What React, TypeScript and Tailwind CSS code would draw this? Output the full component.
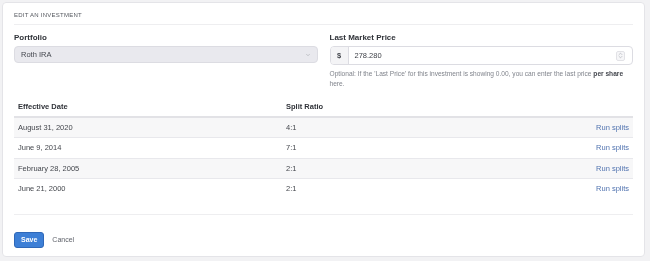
import { ChevronDown, ChevronsUpDown } from "lucide-react";

const SPLITS = [
  { date: "August 31, 2020", ratio: "4:1" },
  { date: "June 9, 2014", ratio: "7:1" },
  { date: "February 28, 2005", ratio: "2:1" },
  { date: "June 21, 2000", ratio: "2:1" },
];

export default function App() {
  return (
    <div className="h-[261px] w-[650px] bg-[#f2f2f4] p-[2px] font-['Liberation_Sans',Arial,sans-serif]">
      <div className="h-[255px] w-[643px] rounded-[4px] border border-[#e4e4e8] bg-white px-[11px] pt-[8px] will-change-transform">
        <div className="border-b border-[#eeeef0] pb-[5px] text-[6px] leading-[8px] uppercase tracking-[0.04em] text-[#55585f]">
          Edit an Investment
        </div>

        <div className="mt-[8px] grid grid-cols-2 gap-[12px]">
          <div>
            <div className="text-[8px] font-bold leading-[10px] text-[#2f3238]">Portfolio</div>
            <div className="mt-[3px] flex h-[17px] items-center justify-between rounded-[4px] border border-[#dcdce2] bg-[#e9e9ee] px-[6px] text-[7.5px] text-[#44474e]">
              <span>Roth IRA</span>
              <ChevronDown className="h-[6px] w-[6px] text-[#9a9ca3]" strokeWidth={2} />
            </div>
          </div>
          <div>
            <div className="text-[8px] font-bold leading-[10px] text-[#2f3238]">Last Market Price</div>
            <div className="mt-[3px] flex h-[19px] overflow-hidden rounded-[4px] border border-[#dcdce2] text-[7.5px]">
              <div className="flex w-[18px] items-center justify-center border-r border-[#dcdce2] bg-[#f4f4f6] font-bold text-[#44474e]">
                $
              </div>
              <div className="flex flex-1 items-center justify-between pl-[6px] pr-[7px] text-[#3c3f46]">
                <span>278.280</span>
                <div className="flex h-[10px] w-[9px] items-center justify-center rounded-[2px] border border-[#e2e2e6] bg-[#f6f6f8]">
                  <ChevronsUpDown className="h-[7px] w-[7px] text-[#8d9097]" strokeWidth={1.5} />
                </div>
              </div>
            </div>
            <p className="mt-[4px] text-[6.6px] leading-[10px] text-[#80848c]">
              Optional: If the 'Last Price' for this investment is showing 0.00, you can enter the last price{" "}
              <span className="font-bold text-[#44474e]">per share</span> here.
            </p>
          </div>
        </div>

        <table className="mt-[9px] w-full border-collapse text-[7.5px]">
          <thead>
            <tr className="border-b-2 border-[#e2e2e6] text-left">
              <th className="h-[19px] w-[268px] px-[4px] font-bold text-[#2f3238]">Effective Date</th>
              <th className="px-[4px] font-bold text-[#2f3238]">Split Ratio</th>
              <th />
            </tr>
          </thead>
          <tbody>
            {SPLITS.map((s, i) => (
              <tr key={s.date} className={`border-b border-[#e8e8ec] last:border-b-0 ${i % 2 === 0 ? "bg-[#f7f7f8]" : "bg-white"}`}>
                <td className="h-[20.5px] px-[4px] text-[#44474d]">{s.date}</td>
                <td className="px-[4px] text-[#44474d]">{s.ratio}</td>
                <td className="px-[4px] text-right text-[#5274b0]">Run splits</td>
              </tr>
            ))}
          </tbody>
        </table>

        <div className="mt-[15px] border-t border-[#eeeef0] pt-[17px]">
          <div className="flex items-center gap-[8px]">
            <button className="h-[16px] rounded-[3px] border border-[#2f68b8] bg-[#3d7fd6] px-[6px] text-[7px] font-bold text-white">
              Save
            </button>
            <span className="text-[7px] text-[#5f626a]">Cancel</span>
          </div>
        </div>
      </div>
    </div>
  );
}
